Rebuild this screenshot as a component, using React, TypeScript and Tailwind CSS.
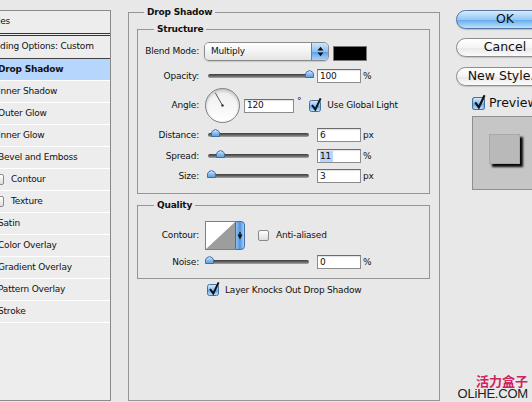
import React from "react";

function CheckOn({ s = 12 }: { s?: number }) {
  return (
    <svg width={s} height={s} viewBox="0 0 12 12" className="block shrink-0 overflow-visible">
      <defs>
        <linearGradient id="cbOn" x1="0" y1="0" x2="0" y2="1">
          <stop offset="0" stopColor="#dcedfc" />
          <stop offset="0.45" stopColor="#8fc2f1" />
          <stop offset="0.55" stopColor="#69a7ea" />
          <stop offset="1" stopColor="#c4e3fc" />
        </linearGradient>
      </defs>
      <rect x="0.5" y="0.5" width="11" height="11" rx="2" fill="url(#cbOn)" stroke="#46709f" />
      <path d="M3 5 L6.3 9.6 L11.6 -1.6" fill="none" stroke="#111" strokeWidth="2" />
    </svg>
  );
}

function CheckOff() {
  return (
    <div className="w-[11px] h-[11px] shrink-0 rounded-[2px] border border-[#8a8a8a] bg-linear-to-b from-white to-[#dedede]" />
  );
}

function Thumb({ className }: { className: string }) {
  return (
    <svg width="9" height="8" viewBox="0 0 9 8" className={`block ${className}`}>
      <defs>
        <linearGradient id="thumbG" x1="0" y1="0" x2="0" y2="1">
          <stop offset="0" stopColor="#e3f0fd" />
          <stop offset="0.5" stopColor="#8ebfef" />
          <stop offset="1" stopColor="#5a9ae2" />
        </linearGradient>
      </defs>
      <path d="M0.5 7.5 V4.2 Q0.5 2.6 2 1.7 L4.5 0.5 L7 1.7 Q8.5 2.6 8.5 4.2 V7.5 Z" fill="url(#thumbG)" stroke="#3f6ea8" />
    </svg>
  );
}

function Slider({ pos }: { pos: string }) {
  return (
    <div className="relative ml-[6px] w-[107px] h-[14px] flex items-center px-[3px] shrink-0">
      <div className="flex-1 h-[4px] rounded-full bg-linear-to-b from-[#3c3c3c] via-[#666] to-[#a8a8a8]" />
      <Thumb className={`absolute top-[1px] ${pos}`} />
    </div>
  );
}

function Field({ children, w }: { children: React.ReactNode; w: string }) {
  return (
    <div
      className={`${w} h-[14px] shrink-0 bg-white border border-[#8c8c8c] border-t-[#6c6c6c] shadow-[inset_0_1px_1px_rgba(0,0,0,0.12)] pl-[2px] flex items-center leading-none`}
    >
      {children}
    </div>
  );
}

function Label({ children }: { children: React.ReactNode }) {
  return <div className="w-[61px] shrink-0 text-right leading-none">{children}</div>;
}

function SliderRow({
  label,
  value,
  unit,
  pos,
  mt,
  sel,
}: {
  label: string;
  value: string;
  unit: string;
  pos: string;
  mt: string;
  sel?: boolean;
}) {
  return (
    <div className={`${mt} h-[14px] flex items-center`}>
      <Label>{label}</Label>
      <Slider pos={pos} />
      <div className="ml-[5px]">
        <Field w="w-[44px]">
          {sel ? <span className="bg-[#b6d5fd] leading-[11px] pr-[2px]">{value}</span> : value}
        </Field>
      </div>
      <div className="ml-[2px] leading-none">{unit}</div>
    </div>
  );
}

const items: { t: string; sel?: boolean; cb?: boolean }[] = [
  { t: "Drop Shadow", sel: true },
  { t: "Inner Shadow" },
  { t: "Outer Glow" },
  { t: "Inner Glow" },
  { t: "Bevel and Emboss" },
  { t: "Contour", cb: true },
  { t: "Texture", cb: true },
  { t: "Satin" },
  { t: "Color Overlay" },
  { t: "Gradient Overlay" },
  { t: "Pattern Overlay" },
  { t: "Stroke" },
];

export default function App() {
  return (
    <div className="relative w-[532px] h-[402px] overflow-hidden bg-[#e8e8e8] flex items-start font-['DejaVu_Sans',sans-serif] text-[9px] tracking-[-0.2px] text-[#111]">
      {/* Left styles list */}
      <div className="mt-[10px] w-[111px] h-[391px] shrink-0 border-y border-r border-[#8a8a8a] bg-[#ededed] overflow-hidden">
        <div className="-ml-[20px] w-[131px]">
          <div className="h-[25px] border-b-[3px] border-double border-[#333] flex items-center pl-[4px]">Styles</div>
          <div className="h-[23px] border-b border-[#444] flex items-center pl-[1px]">Blending Options: Custom</div>
          {items.map((it) => (
            <div
              key={it.t}
              className={`h-[22px] border-b border-white flex items-center ${
                it.sel ? "bg-[#b6d6fd] font-bold" : ""
              } ${it.cb ? "pl-[13px]" : "pl-[18px]"}`}
            >
              {it.cb && <CheckOff />}
              <span className={it.cb ? "ml-[7px]" : ""}>{it.t}</span>
            </div>
          ))}
        </div>
      </div>

      {/* Main Drop Shadow group */}
      <fieldset className="ml-[17px] mt-[7px] w-[312px] h-[394px] shrink-0 border border-[#959595] min-w-0">
        <legend className="ml-[15px] px-[3px] font-bold leading-[11px]">Drop Shadow</legend>

        <fieldset className="mt-[6px] ml-[8px] w-[293px] h-[170px] border border-[#959595] min-w-0">
          <legend className="ml-[16px] px-[3px] font-bold leading-[11px]">Structure</legend>

          {/* Blend mode */}
          <div className="mt-[7px] h-[19px] flex items-center">
            <Label>Blend Mode:</Label>
            <div className="ml-[5px] w-[125px] h-[19px] flex rounded-[5px] border border-[#8a8a8a] overflow-hidden shadow-[0_1px_1px_rgba(0,0,0,0.15)]">
              <div className="flex-1 bg-linear-to-b from-white via-[#f3f3f3] to-[#e4e4e4] flex items-center pl-[6px] leading-none">
                Multiply
              </div>
              <div className="w-[17px] border-l border-[#5a82b5] bg-[linear-gradient(to_bottom,#cfe6fc,#8fc1f2_50%,#5b9ee8_51%,#a9d3fa)] flex items-center justify-center">
                <svg width="7" height="11" viewBox="0 0 7 11" className="block">
                  <path d="M0.5 4.5 L3.5 0.8 L6.5 4.5 Z" fill="#111" />
                  <path d="M0.5 6.5 L6.5 6.5 L3.5 10.2 Z" fill="#111" />
                </svg>
              </div>
            </div>
            <div className="ml-[4px] self-end w-[34px] h-[15px] bg-black border border-[#777]" />
          </div>

          <SliderRow label="Opacity:" value="100" unit="%" pos="left-[100px]" mt="mt-[8px]" />

          {/* Angle */}
          <div className="mt-[5px] h-[35px] flex items-center">
            <Label>Angle:</Label>
            <div className="ml-[6px] w-[35px] h-[35px] shrink-0 rounded-full border border-[#7d7d7d] bg-linear-to-b from-[#ededed] to-white shadow-[inset_0_2px_3px_rgba(0,0,0,0.18)]">
              <svg width="33" height="33" viewBox="0 0 33 33" className="block">
                <line x1="16.5" y1="16.5" x2="9.3" y2="3.8" stroke="#555" strokeWidth="1" />
                <circle cx="16.5" cy="16.5" r="1.2" fill="#333" />
              </svg>
            </div>
            <div className="ml-[4px]">
              <Field w="w-[50px]">120</Field>
            </div>
            <div className="ml-[3px] self-start mt-[9px] leading-none">°</div>
            <div className="ml-[8px]">
              <CheckOn s={12} />
            </div>
            <div className="ml-[6px] leading-none">Use Global Light</div>
          </div>

          <SliderRow label="Distance:" value="6" unit="px" pos="left-[6px]" mt="mt-[5px]" />
          <SliderRow label="Spread:" value="11" unit="%" pos="left-[11px]" mt="mt-[7px]" sel />
          <SliderRow label="Size:" value="3" unit="px" pos="left-[2px]" mt="mt-[6px]" />
        </fieldset>

        <fieldset className="mt-[6px] ml-[8px] w-[293px] h-[79px] border border-[#959595] min-w-0">
          <legend className="ml-[16px] px-[3px] font-bold leading-[11px]">Quality</legend>
          <div className="mt-[10px] h-[29px] flex items-center">
            <Label>Contour:</Label>
            <div className="ml-[6px] flex w-[40px] h-[29px] shrink-0">
              <div className="w-[30px] h-full border border-[#7f7f7f] border-r-0 bg-white overflow-hidden">
                <svg width="29" height="27" viewBox="0 0 29 27" className="block">
                  <polygon points="0,27 29,0 29,27" fill="#9d9d9d" />
                </svg>
              </div>
              <div className="w-[10px] h-full rounded-r-[4px] border border-[#3f6fa8] bg-[linear-gradient(to_right,#8fc1f2,#4f93e0_50%,#a8d2fa)] flex items-center justify-center">
                <svg width="6" height="8" viewBox="0 0 6 8" className="block">
                  <rect x="2.3" y="0" width="1.4" height="3" fill="#111" />
                  <path d="M0.5 2.5 H5.5 L3 7.5 Z" fill="#111" />
                </svg>
              </div>
            </div>
            <div className="ml-[13px]">
              <CheckOff />
            </div>
            <div className="ml-[7px] leading-none">Anti-aliased</div>
          </div>
          <SliderRow label="Noise:" value="0" unit="%" pos="left-[0px]" mt="mt-[5px]" />
        </fieldset>

        <div className="mt-[5px] ml-[78px] h-[12px] flex items-center">
          <CheckOn s={12} />
          <div className="ml-[6px] leading-none">Layer Knocks Out Drop Shadow</div>
        </div>
      </fieldset>

      {/* Right column */}
      <div className="ml-[16px] mt-[10px] w-[98px] shrink-0 flex flex-col text-[12.5px] tracking-normal">
        <div className="h-[19px] rounded-full border border-[#5577a0] bg-[linear-gradient(to_bottom,#d6ecfd,#93c8f5_50%,#62aaef_51%,#bde3fd)] flex items-center justify-center leading-none shadow-[0_1px_1px_rgba(0,0,0,0.2)]">
          OK
        </div>
        <div className="mt-[9px] h-[19px] rounded-full border border-[#8d8d8d] bg-[linear-gradient(to_bottom,#ffffff,#f4f4f4_50%,#e8e8e8_51%,#fbfbfb)] flex items-center justify-center leading-none shadow-[0_1px_1px_rgba(0,0,0,0.15)]">
          Cancel
        </div>
        <div className="mt-[10px] h-[19px] rounded-full border border-[#8d8d8d] bg-[linear-gradient(to_bottom,#ffffff,#f4f4f4_50%,#e8e8e8_51%,#fbfbfb)] flex items-center justify-center leading-none whitespace-nowrap shadow-[0_1px_1px_rgba(0,0,0,0.15)]">
          New Style...
        </div>
        <div className="mt-[11px] ml-[16px] h-[13px] flex items-center">
          <CheckOn s={13} />
          <span className="ml-[4px] leading-none">Preview</span>
        </div>
        <div className="mt-[6px] ml-[16px] w-[68px] h-[74px] bg-[#c6c6c6] border border-[#8e8e8e] pl-[16px] pt-[17px]">
          <div className="w-[31px] h-[30px] bg-[#b9b9b9] border border-[#a8a8a8] shadow-[3px_3px_2px_rgba(0,0,0,0.95)]" />
        </div>
      </div>

      {/* Watermark */}
      <div className="absolute right-[4px] bottom-[2px] flex flex-col items-end">
        <div className="font-['Noto_Sans_CJK_SC',sans-serif] font-bold text-[13px] leading-[13px] tracking-normal text-[#d0245c]">
          活力盒子
        </div>
        <div className="font-['Liberation_Sans',sans-serif] text-[13px] leading-[13px] tracking-[-0.2px] text-[#222]">
          OLiHE.COM
        </div>
      </div>
    </div>
  );
}
